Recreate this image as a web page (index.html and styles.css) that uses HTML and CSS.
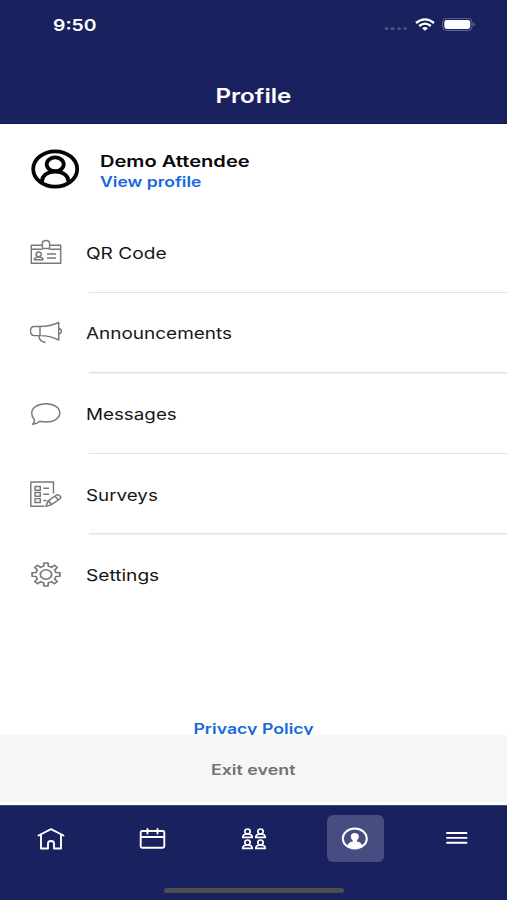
FILE: index.html
```html
<!DOCTYPE html>
<html lang="en">
<head>
<meta charset="utf-8">
<title>Profile</title>
<link rel="stylesheet" href="styles.css">
</head>
<body>
<div class="app">
  <header class="header">
    <div class="status">
      <span class="wide time">9:50</span>
      <div class="signals">
        <svg width="25" height="6" viewBox="0 0 25 6" fill="#4a5187"><ellipse cx="2.500" cy="2.500" rx="2" ry="1.600"/><ellipse cx="8.700" cy="2.500" rx="2" ry="1.600"/><ellipse cx="15" cy="2.500" rx="2" ry="1.600"/><ellipse cx="21.200" cy="2.500" rx="2" ry="1.600"/></svg>
        <svg class="wifi" width="20" height="14" viewBox="0 0 20 14" fill="none" stroke="#fff" stroke-width="2.300"><path d="M1 5Q10-2.200 19 5M4.200 8Q10 3.200 15.800 8"/><path d="M7 10.200Q10 8 13 10.200L10 12.800Z" fill="#fff" stroke="none"/></svg>
        <svg class="battery" width="34" height="14" viewBox="0 0 34 14"><rect x=".6" y=".3" width="29.500" height="12.200" rx="4" fill="none" stroke="#626896"/><rect x="2.300" y="1.900" width="26" height="9.100" rx="2.400" fill="#fff"/><path d="M31.500 4.500Q34 6.500 31.500 8.500Z" fill="#777ca6"/></svg>
      </div>
    </div>
    <h1 class="title"><span class="wide">Profile</span></h1>
  </header>

  <main class="main">
    <section class="person">
      <svg width="50" height="42" viewBox="0 0 50 42" fill="none" stroke="#050505" stroke-width="3.800"><ellipse cx="25.200" cy="21" rx="22" ry="17.700"/><ellipse cx="25.200" cy="16.300" rx="8.500" ry="6.900"/><path d="M12 35V33.500C12 27.500 17.700 23.600 25.200 23.600S38.400 27.500 38.400 33.500V35"/></svg>
      <div class="person-text">
        <span class="wide name">Demo Attendee</span>
        <a class="wide view">View profile</a>
      </div>
    </section>
    <ul class="menu">
      <li class="item">
        <svg class="icon" viewBox="0 0 34 28"><path d="M13 6.300H2.300V24.300H31.700V6.300H20.600M2.300 10.300H13.600M20 10.300H31.700"/><path d="M13.400 4.500Q13.400 1.500 17 1.500T20.600 4.500V8.500Q20.600 9.500 19.500 9.500H14.500Q13.400 9.500 13.400 8.500Z"/><ellipse cx="9.700" cy="15.300" rx="2.600" ry="2.300"/><path d="M5.400 20.800Q5.400 17.900 9.700 17.900T14 20.800ZM18 15H27M18 19H27"/></svg>
        <span class="wide label">QR Code</span>
      </li>
      <li class="item">
        <svg class="icon" viewBox="0 0 34 28"><path d="M11 7.500H5.300Q1.500 7.500 1.500 12T5.300 16.600H11Q21 16.600 29.700 21V3.500Q21 7.500 11 7.500V16.600M30.300 9.500Q32.500 10.200 32.500 12.300T30.300 15M9.800 16.800Q10.200 22.500 16.500 23.500"/></svg>
        <span class="wide label l-ann">Announcements</span>
      </li>
      <li class="item">
        <svg class="icon" viewBox="0 0 34 28"><path d="M3.600 24.300Q6 22.300 5.200 19.300Q2.700 16.500 2.700 13C2.700 7.700 9 3.700 17 3.700S30.800 7.800 30.800 13.100S25 22 17 22Q13.500 22 10.800 21.200Q8 23.900 3.600 24.300Z"/></svg>
        <span class="wide label l-msg">Messages</span>
      </li>
      <li class="item">
        <svg class="icon" viewBox="0 0 34 28"><path d="M15.500 25.200H1.800V1H24.500V12.500M6 5.400H11.300V9.200H6ZM6 11.400H11.300V15.200H6ZM6 17.600H11.300V21.400H6ZM14.300 7.300H20M14.300 13.300H20M14.300 19.500H17.500"/><path d="M17 25.400L18.800 20.200L27.500 14Q29.500 13.200 31 15T30.800 18L22 23.900ZM18.800 20.200Q21.500 20.700 22 23.900M26 15.200L29.300 19"/></svg>
        <span class="wide label l-sur">Surveys</span>
      </li>
      <li class="item">
        <svg class="icon" viewBox="0 0 34 28"><g transform="translate(17 13.500) scale(1.210 1)"><path d="M-1.900-8.200L-1.700-11.500H1.700L1.900-8.200Q3.300-8 4.500-7.100L7-9.300L9.300-7L7.100-4.500Q8-3.300 8.200-1.900L11.500-1.700V1.700L8.200 1.900Q8 3.300 7.100 4.500L9.300 7L7 9.300L4.500 7.100Q3.300 8 1.900 8.200L1.700 11.500H-1.700L-1.900 8.200Q-3.300 8-4.500 7.100L-7 9.300L-9.300 7L-7.100 4.500Q-8 3.300-8.200 1.900L-11.500 1.700V-1.700L-8.200-1.900Q-8-3.300-7.100-4.500L-9.300-7L-7-9.300L-4.500-7.100Q-3.300-8-1.900-8.200Z"/><circle r="4.700"/></g></svg>
        <span class="wide label l-set">Settings</span>
      </li>
    </ul>
    <a class="privacy"><span class="wide">Privacy Policy</span></a>
  </main>

  <footer class="exit"><span class="wide">Exit event</span></footer>

  <nav class="nav">
    <div class="tabs">
      <div class="tab"><svg width="30" height="24" viewBox="0 0 30 24" fill="none" stroke="#fff" stroke-width="1.900" stroke-linecap="round" stroke-linejoin="round"><path d="M2.500 8.500L15 2.200L27.500 8.500M5 7.500V21.500H12V16.500Q12 14 15 14T18 16.500V21.500H25V7.500"/></svg></div>
      <div class="tab"><svg width="30" height="24" viewBox="0 0 30 24" fill="none" stroke="#fff" stroke-width="1.900" stroke-linecap="round"><rect x="3.700" y="4" width="23.600" height="16.700" rx="1.500"/><path d="M4 10H27M10.500 2V6.500M20.500 2V6.500"/></svg></div>
      <div class="tab"><svg width="30" height="24" viewBox="0 0 30 24" fill="none" stroke="#fff" stroke-width="1.700"><defs><g id="p"><ellipse cx="6" cy="3.500" rx="2.700" ry="2.500"/><path d="M1.300 9.300Q1.300 6 6 6T10.700 9.300Z"/></g></defs><use href="#p" x="2.500" y="1"/><use href="#p" x="15.500" y="1"/><use href="#p" x="2.500" y="12"/><use href="#p" x="15.500" y="12"/></svg></div>
      <div class="tab active"><svg width="30" height="24" viewBox="0 0 30 24"><ellipse cx="14.800" cy="11.500" rx="12" ry="10" fill="none" stroke="#fff" stroke-width="2"/><path d="M7.500 18.800Q8 15.300 12.600 14.400V13Q10.800 12 10.800 9.500Q10.800 6 14.800 6T18.800 9.500Q18.800 12 17 13V14.400Q21.600 15.300 22.100 18.800Q18.800 21.200 14.800 21.200T7.500 18.800Z" fill="#fff"/></svg></div>
      <div class="tab"><svg width="30" height="24" viewBox="0 0 30 24" stroke="#fff" stroke-width="1.900" stroke-linecap="round"><path d="M5 6H24.500M5 10.900H24.500M5 15.800H24.500"/></svg></div>
    </div>
    <div class="handle"></div>
  </nav>
</div>
</body>
</html>
```
FILE: styles.css
```css
* { box-sizing: border-box; }
body { margin: 0; font-family: Inter, "Liberation Sans", sans-serif; background: #fff; color: #161616; }
.app { width: 507px; height: 900px; display: flex; flex-direction: column; overflow: hidden; }
.wide { display: inline-block; transform: scaleX(1.21); transform-origin: center; white-space: nowrap; }

.header { height: 124px; flex: none; background: #19215f; color: #fff; border-bottom: 1px solid #11184f; }
.status { height: 49px; display: flex; justify-content: space-between; padding: 1px 31px 0 53px; align-items: center; }
.time { font-size: 16px; font-weight: 600; transform-origin: left; }
.signals { display: flex; align-items: center; }
.signals svg:first-child { margin-top: 8px; }
.wifi { margin-left: 6px; }
.battery { margin-left: 7px; }
.title { margin: 0; height: 93px; display: flex; align-items: center; justify-content: center; font-size: 20px; font-weight: 600; line-height: 24px; }

.main { flex: none; height: 611px; display: flex; flex-direction: column; overflow: hidden; }
.person { height: 88.6px; flex: none; display: flex; align-items: center; padding: 2px 0 0 30px; }
.person-text { display: flex; flex-direction: column; align-items: flex-start; margin-left: 20px; padding-top: 5px; }
.person-text .wide { transform: scaleX(1.255); transform-origin: left; }
.name { font-size: 16px; line-height: 20px; font-weight: 600; color: #080808; }
.view { font-size: 14px; line-height: 21px; font-weight: 600; color: #1769dc; }
.menu { list-style: none; margin: 0; padding: 0; }
.item { height: 80.6px; display: flex; align-items: center; padding-left: 29px; background: linear-gradient(#e2e2e2, #e2e2e2) 89px 100% / 100% 1.500px no-repeat; }
.item:last-child { background: none; }
.icon { width: 34px; height: 28px; fill: none; stroke: #73797e; stroke-width: 1.450; stroke-linejoin: round; }
.label { font-size: 16px; margin-left: 23px; line-height: 20px; transform: scaleX(1.195); transform-origin: left; }
.l-ann { transform: scaleX(1.185); }
.l-msg { transform: scaleX(1.175); }
.l-sur { transform: scaleX(1.175); }
.privacy { text-align: center; margin-top: 103px; font-size: 14px; line-height: 20px; font-weight: 600; color: #1769dc; }
.privacy .wide { transform: scaleX(1.265); }

.exit { height: 70px; flex: none; background: #f6f6f6; border-bottom: 3px solid #fdfdfd; display: flex; align-items: center; justify-content: center; font-size: 14px; font-weight: 600; color: #707276; padding-top: 1px; }
.exit .wide { transform: scaleX(1.275); }
.nav { flex: 1; background: #19215f; border-top: 1px solid #42497e; }
.tabs { display: flex; justify-content: space-between; padding: 9px 22px 0; }
.tab { width: 57px; height: 47px; border-radius: 6px; display: flex; align-items: center; justify-content: center; }
.active { background: #474d80; }
.handle { width: 180px; height: 5px; border-radius: 3px; background: #4e4e50; margin: 25.500px auto 0; }
```
